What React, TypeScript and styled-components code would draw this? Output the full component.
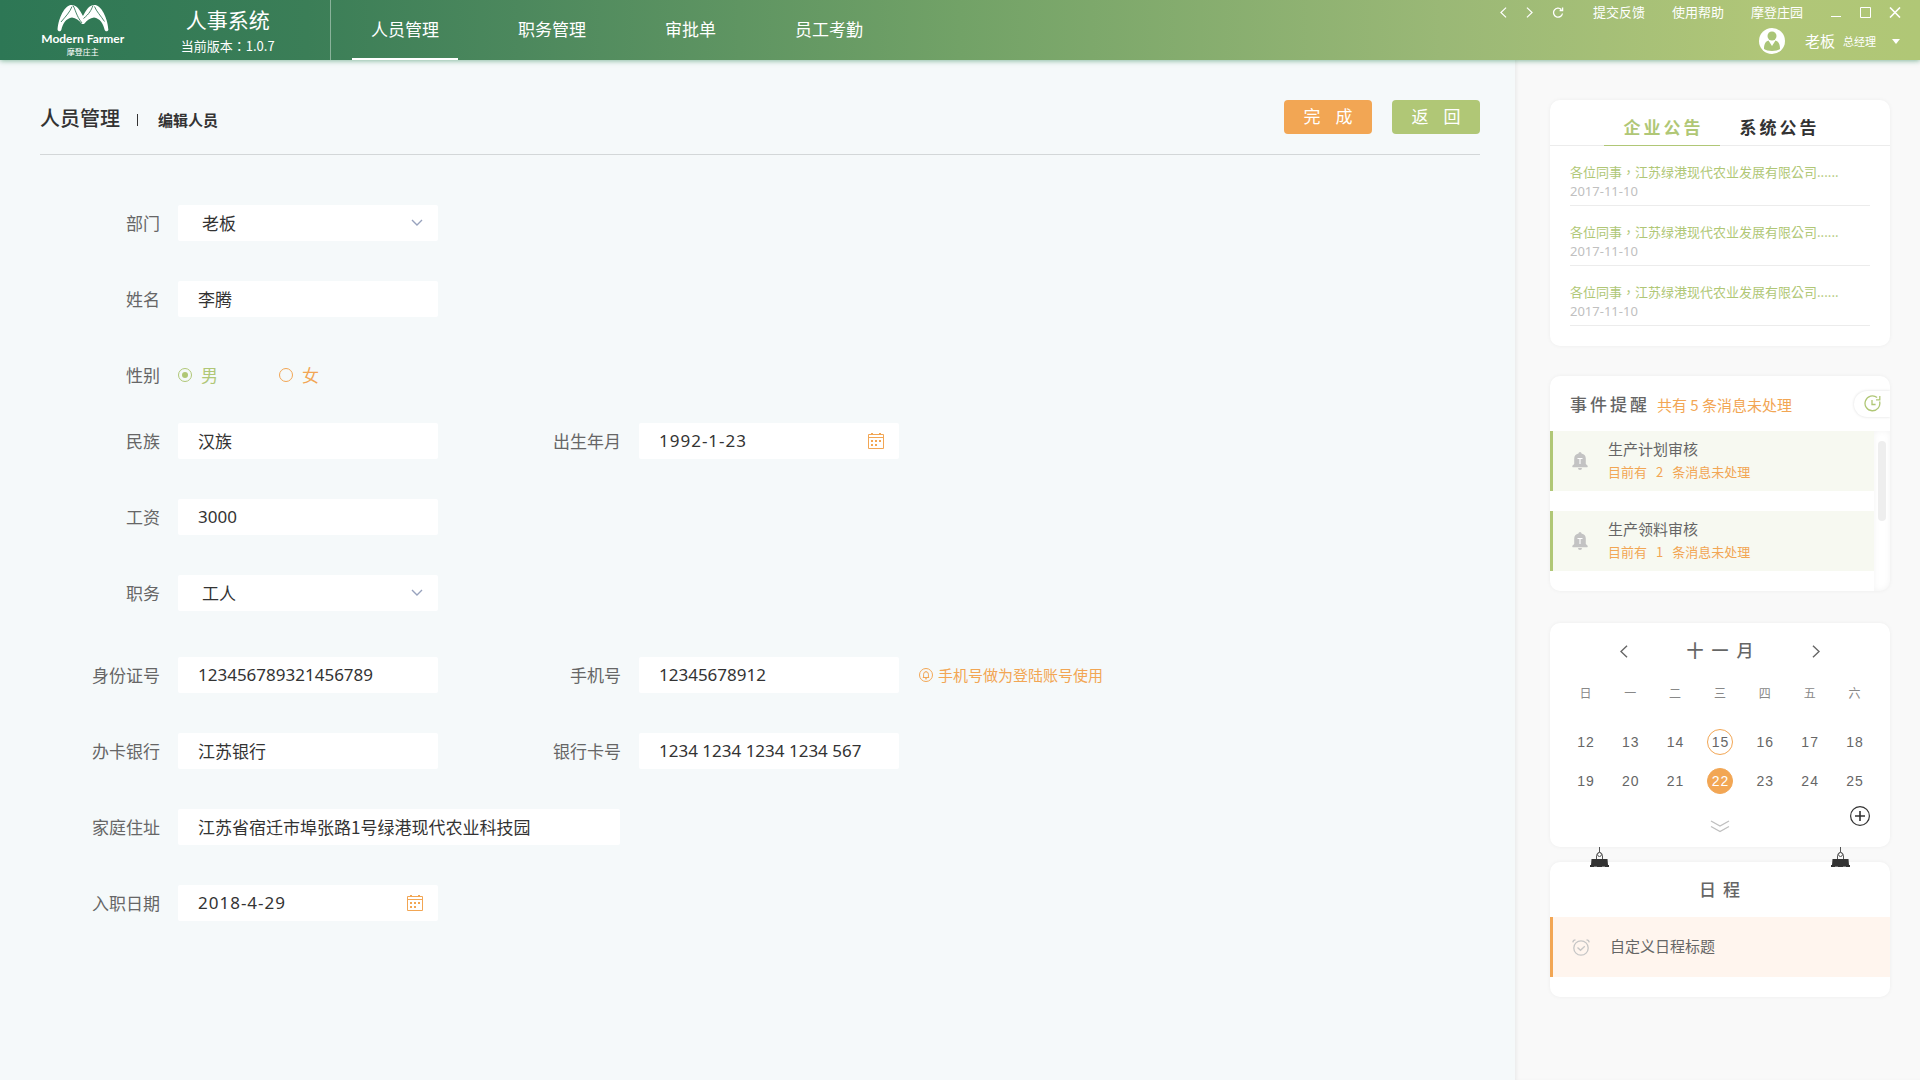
import React, { useState } from 'react';
import styled, { createGlobalStyle, css } from 'styled-components';

const color = {
  green: '#b0c776',
  orange: '#f2a654',
  text: '#333333',
  label: '#666666',
  muted: '#c0c0c0',
  line: '#ececec',
};

const GlobalStyle = createGlobalStyle`
  *, *::before, *::after { box-sizing: border-box; }
  body {
    margin: 0;
    background: #f5f9fa;
    color: ${color.text};
    font-family: "Noto Sans CJK SC", "Noto Sans", sans-serif;
    font-size: 17px;
    line-height: 20px;
  }
  button, input, select { font: inherit; color: inherit; }
  button { border: 0; padding: 0; background: none; cursor: pointer; }
  a { color: inherit; text-decoration: none; }
  h1, h2, p, ul { margin: 0; padding: 0; font-weight: 400; }
  ul { list-style: none; }
  svg { display: block; }
`;

/* ---------- frame ---------- */

const Page = styled.div`
  min-height: 100vh;
  display: flex;
  flex-direction: column;
`;

const Header = styled.header`
  position: relative;
  z-index: 1;
  display: flex;
  height: 60px;
  color: #fff;
  background: linear-gradient(90deg, #2d7755 0%, #3b7e57 16%, #4c885d 27%, #72a267 50%, #9ab876 75%, #b0c678 92%, #b0c776 100%);
  box-shadow: 0 1px 5px rgba(45, 135, 85, 0.55);
`;

const Brand = styled.div`
  display: flex;
  width: 331px;
  padding-left: 40px;
  border-right: 1px solid rgba(255, 255, 255, 0.4);
`;

const Logo = styled.div`
  display: flex;
  flex-direction: column;
  align-items: center;
  width: 86px;
  padding-top: 4px;
`;

const LogoName = styled.span`
  font: 700 12px/14px Lato, sans-serif;
  white-space: nowrap;
`;

const LogoSub = styled.span`
  font-size: 8px;
  line-height: 12px;
`;

const System = styled.div`
  display: flex;
  flex-direction: column;
  align-items: center;
  gap: 5px;
  width: 206px;
  padding-top: 7px;
`;

const SystemName = styled.span`
  font-size: 21px;
  line-height: 24px;
`;

const Version = styled.span`
  font-family: "Noto Sans CJK TC", sans-serif;
  font-size: 13px;
  line-height: 20px;
`;

const Nav = styled.nav`
  display: flex;
  gap: 41px;
  margin-left: 21px;
`;

const NavLink = styled.a<{ $active?: boolean }>`
  display: flex;
  align-items: center;
  padding: 0 19px;
  border-bottom: 2px solid ${p => (p.$active ? '#fff' : 'transparent')};
`;

const HeaderEnd = styled.div`
  display: flex;
  flex-direction: column;
  align-items: flex-end;
  margin-left: auto;
  padding-right: 19px;
`;

const WindowBar = styled.div`
  display: flex;
  align-items: center;
  height: 24px;
  font-size: 13px;
`;

const HistoryButtons = styled.div`
  display: flex;
  gap: 19px;
  margin-right: 29px;
`;

const HelpLinks = styled.div`
  display: flex;
  gap: 27px;
  margin-right: 28px;
`;

const WindowButtons = styled.div`
  display: flex;
  gap: 18px;
`;

const Account = styled.button`
  display: flex;
  align-items: center;
  height: 34px;
`;

const AccountName = styled.span`
  margin: 0 8px 0 20px;
  font-size: 15px;
`;

const AccountRole = styled.span`
  margin: 0 15px 0 0;
  font-size: 11px;
`;

const Body = styled.div`
  flex: 1;
  display: flex;
`;

/* ---------- main form ---------- */

const Main = styled.main`
  flex: 1;
  padding: 40px 35px 40px 40px;
`;

const TitleBar = styled.div`
  display: flex;
  align-items: flex-start;
  justify-content: space-between;
  height: 55px;
  border-bottom: 1px solid #d3d7d8;
`;

const Titles = styled.div`
  display: flex;
  align-items: center;
  height: 36px;
`;

const Title = styled.h1`
  font-size: 20px;
  font-weight: 500;
`;

const SubTitle = styled.h2`
  display: flex;
  align-items: center;
  gap: 20px;
  margin-left: 17px;
  padding-top: 4px;
  font-size: 15px;
  font-weight: 700;

  &::before {
    content: '';
    width: 1px;
    height: 12px;
    background: ${color.text};
  }
`;

const Actions = styled.div`
  display: flex;
  gap: 20px;
`;

const ActionButton = styled.button<{ $tone: string }>`
  width: 88px;
  height: 34px;
  padding: 0 0 2px 15px;
  border-radius: 4px;
  background: ${p => p.$tone};
  color: #fff;
  letter-spacing: 15px;
`;

const Form = styled.form`
  padding-top: 50px;
`;

const Row = styled.div<{ $after?: number }>`
  display: flex;
  align-items: center;
  height: 36px;
  margin-bottom: ${p => p.$after ?? 40}px;
`;

const Label = styled.label<{ $second?: boolean }>`
  width: ${p => (p.$second ? 183 : 120)}px;
  margin-right: 18px;
  color: ${color.label};
  text-align: right;
`;

const Caption = styled.span`
  width: 120px;
  margin-right: 18px;
  color: ${color.label};
  text-align: right;
`;

const Field = styled.div<{ $wide?: boolean }>`
  display: flex;
  align-items: center;
  width: ${p => (p.$wide ? 442 : 260)}px;
  height: 36px;
  padding-right: 15px;
  border-radius: 2px;
  background: #fff;
`;

const fieldText = css`
  flex: 1;
  min-width: 0;
  height: 36px;
  border: 0;
  outline: 0;
  background: transparent;
`;

const TextInput = styled.input<{ $kind?: 'number' | 'date' }>`
  ${fieldText}
  padding: 0 0 2px 20px;
  ${p => p.$kind && css`font-family: "Noto Sans", sans-serif;`}
  ${p => p.$kind === 'date' && css`letter-spacing: 1px;`}
`;

const SelectBox = styled.div`
  display: grid;
  grid-template-columns: 1fr 27px;
  align-items: center;
  width: 260px;
  height: 36px;
  border-radius: 2px;
  background: #fff;
`;

const Select = styled.select`
  ${fieldText}
  grid-area: 1 / 1 / 2 / 3;
  appearance: none;
  padding: 0 0 0 24px;
`;

const SelectArrow = styled.svg`
  grid-area: 1 / 2;
  pointer-events: none;
`;

const RadioLabel = styled.label<{ $tone: string }>`
  display: flex;
  align-items: center;
  gap: 9px;
  width: 101px;
  color: ${p => p.$tone};
`;

const Radio = styled.input`
  appearance: none;
  display: grid;
  place-items: center;
  width: 14px;
  height: 14px;
  margin: 0;
  border: 1px solid currentColor;
  border-radius: 50%;

  &:checked::before {
    content: '';
    width: 6px;
    height: 6px;
    border-radius: 50%;
    background: currentColor;
  }
`;

const Hint = styled.span`
  display: flex;
  align-items: center;
  gap: 5px;
  margin-left: 20px;
  color: ${color.orange};
  font-size: 15px;
`;

/* ---------- sidebar ---------- */

const Sidebar = styled.aside`
  width: 405px;
  padding: 40px 30px 40px 35px;
  background: #f9f9f9;
  box-shadow: inset 3px 0 4px -2px rgba(0, 0, 0, 0.08);
`;

const Card = styled.section<{ $after?: number }>`
  position: relative;
  margin-bottom: ${p => p.$after ?? 0}px;
  border-radius: 10px;
  background: #fff;
  box-shadow: 0 0 4px rgba(0, 0, 0, 0.05);
`;

const Tabs = styled.div`
  display: flex;
  justify-content: center;
  height: 46px;
  border-bottom: 1px solid ${color.line};
`;

const Tab = styled.button<{ $active?: boolean }>`
  width: 116px;
  height: 46px;
  padding: 9px 0 0 3px;
  border-bottom: 1px solid ${p => (p.$active ? color.green : color.line)};
  color: ${p => (p.$active ? color.green : color.text)};
  font-weight: 700;
  letter-spacing: 3px;
`;

const NoticeList = styled.ul`
  padding: 0 20px 20px;
`;

const Notice = styled.li`
  display: flex;
  flex-direction: column;
  justify-content: flex-end;
  height: 60px;
  padding-bottom: 5px;
  border-bottom: 1px solid ${color.line};
  color: ${color.green};
  font-family: "Noto Sans CJK TC", sans-serif;
  font-size: 13px;
`;

const NoticeDate = styled.time`
  color: ${color.muted};
  font-family: "Noto Sans", sans-serif;
  line-height: 18px;
`;

const EventHead = styled.div`
  display: flex;
  align-items: center;
  height: 55px;
  padding-left: 20px;
`;

const EventTitle = styled.h2`
  color: ${color.label};
  font-size: 17px;
  font-weight: 500;
  letter-spacing: 3px;
`;

const EventCount = styled.p`
  margin-left: 7px;
  padding-top: 2px;
  color: ${color.orange};
  font-size: 15px;
`;

const HistoryButton = styled.button`
  display: flex;
  align-items: center;
  width: 36px;
  height: 26px;
  margin-left: auto;
  padding-left: 10px;
  border-radius: 13px 0 0 13px;
  background: #fff;
  box-shadow: 0 0 3px rgba(0, 0, 0, 0.14);
  clip-path: inset(-4px 0 -4px -4px);
`;

const EventBody = styled.div`
  display: flex;
`;

const EventList = styled.ul`
  flex: 1;
`;

const Entry = styled.li<{ $warm?: boolean }>`
  display: flex;
  align-items: center;
  height: 60px;
  margin-bottom: 20px;
  padding-left: 19px;
  border-left: 3px solid ${p => (p.$warm ? color.orange : color.green)};
  background: ${p => (p.$warm ? '#fff5ee' : '#f7f9f1')};
  color: ${color.label};
  font-size: 15px;
`;

const EntryText = styled.div`
  margin-left: 20px;
  padding-bottom: 2px;
`;

const EntryNote = styled.p`
  padding-top: 3px;
  color: ${color.orange};
  font-size: 13px;
`;

const EntryNumber = styled.span`
  margin: 0 9px;
`;

const ScrollTrack = styled.div`
  width: 16px;
  padding: 10px 4px;
  border-radius: 0 0 10px 0;
  box-shadow: inset 0 0 6px rgba(0, 0, 0, 0.05);
`;

const ScrollThumb = styled.div`
  width: 8px;
  height: 80px;
  border-radius: 4px;
  background: #eeeeee;
`;

const MonthBar = styled.div`
  display: flex;
  align-items: center;
  justify-content: space-between;
  height: 56px;
  padding: 0 70px;
  color: ${color.label};
`;

const MonthName = styled.h2`
  padding: 0 0 2px 8px;
  font-size: 17px;
  font-weight: 500;
  letter-spacing: 8px;
`;

const Calendar = styled.table`
  width: calc(100% - 26px);
  margin: 0 13px;
  border-collapse: collapse;
  table-layout: fixed;
  color: ${color.label};
  text-align: center;
`;

const WeekDay = styled.th`
  height: 28px;
  padding: 0;
  color: #888888;
  font-size: 12px;
  font-weight: 400;
`;

const DayCell = styled.td<{ $first?: boolean }>`
  height: ${p => (p.$first ? 54 : 39)}px;
  padding: ${p => (p.$first ? 15 : 0)}px 0 0;
`;

const Day = styled.button<{ $mark?: 'ring' | 'solid' }>`
  display: block;
  width: 26px;
  height: 26px;
  margin: 0 auto;
  padding-left: 1px;
  border: 1px solid ${p => (p.$mark ? color.orange : 'transparent')};
  border-radius: 50%;
  background: ${p => (p.$mark === 'solid' ? color.orange : 'transparent')};
  color: ${p => (p.$mark === 'solid' ? '#fff' : color.label)};
  font: 14px/20px "Liberation Sans", Arial, sans-serif;
  letter-spacing: 1px;
`;

const CalendarFoot = styled.div`
  display: grid;
  grid-template-columns: 1fr auto 1fr;
  height: 47px;
  padding: 6px 20px 0;
`;

const ExpandButton = styled.button`
  grid-column: 2;
  align-self: center;
`;

const AddButton = styled.button`
  grid-column: 3;
  justify-self: end;
  align-self: start;
`;

const Clip = styled.svg<{ $side: 'left' | 'right' }>`
  position: absolute;
  top: -15px;
  ${p => p.$side}: 40px;
`;

const ScheduleTitle = styled.h2`
  height: 55px;
  padding-left: 6px;
  color: ${color.label};
  font-size: 17px;
  font-weight: 500;
  line-height: 53px;
  letter-spacing: 7px;
  text-align: center;
`;

const CardEnd = styled.div`
  overflow: hidden;
`;

/* ---------- drawings ---------- */

const LogoMark = () => (
  <svg width="52" height="28" viewBox="0 0 52 28" fill="#fff" aria-hidden="true">
    <path d="M.6 26C1 17 6 3 13.500 1c6-1 9.500 5 12.500 11C29 6 32.500 0 38.500 1 46 3 51 17 51.400 26c-1 1.800-3 1.500-3.700 0C46 19 43 14.500 37 13.500c-4 .5-7 3-9.500 6-.8.8-2.200.8-3 0-2.500-3-5.500-5.500-9.500-6C9 14.500 6 19 4.300 26c-.7 1.500-2.700 1.800-3.700 0z" />
    <path d="M16 1.500c2.500 4 3 10 9 17.500M36 1.500c-2 5-3.500 8-9.500 13M15 2.500C13 8 9 12 4 18M37.500 2.500c2 5 6 9 10 15" fill="none" stroke="#37795a" strokeWidth="0.900" />
  </svg>
);

const Chevron = ({ flip, w = 7, h = 11 }: { flip?: boolean; w?: number; h?: number }) => (
  <svg width={w} height={h} viewBox="0 0 7 12" fill="none" stroke="currentColor" strokeWidth="1.3" aria-hidden="true">
    <path d={flip ? 'M.7.7 6.3 6 .7 11.3' : 'M6.3.7.7 6l5.6 5.3'} />
  </svg>
);

const CalendarIcon = () => (
  <svg width="16" height="16" viewBox="0 0 16 16" aria-hidden="true">
    <path d="M.5 1.5h15v14H.5zM.5 4.5h15" fill="none" stroke={color.orange} />
    <path d="M3 0h2v2H3zM11 0h2v2h-2zM3 7h2v2H3zM7 7h2v2H7zM11 7h2v2h-2zM3 11h2v2H3zM7 11h2v2H7z" fill={color.orange} />
  </svg>
);

const HintIcon = () => (
  <svg width="14" height="14" viewBox="0 0 14 14" fill="none" stroke={color.orange} aria-hidden="true">
    <circle cx="7" cy="7" r="6.5" />
    <path d="M3.8 9.5h6.4M4.6 9.3V6.2a2.4 2.4 0 0 1 4.8 0v3.1M6 10.8h2M7 3v1" />
  </svg>
);

const BellIcon = () => (
  <svg width="16" height="18" viewBox="0 0 16 18" aria-hidden="true">
    <path d="M6.500 1.500a1.500 1.500 0 0 1 3 0 5.500 5.500 0 0 1 4.300 5.400V12l1.600 1.400c.7.600.4 1.800-.6 1.800H1.200c-1 0-1.300-1.200-.6-1.800L2.200 12V6.900a5.500 5.500 0 0 1 4.300-5.400zM6 16h4a2 2 0 0 1-4 0z" fill="#c3c3c3" />
    <path d="M5.500 6.500h5M8 6.500v5.500" stroke="#fff" strokeWidth="1.100" />
  </svg>
);

const ClockIcon = () => (
  <svg width="17" height="17" viewBox="0 0 17 17" fill="none" stroke={color.green} strokeWidth="1.300" aria-hidden="true">
    <path d="M15.600 6.500a7.400 7.400 0 1 1-2.500-3.900" />
    <path d="M15.800 1v3.800H12" />
    <path d="M8 5v4.500h3.600" />
  </svg>
);

const AlarmIcon = () => (
  <svg width="18" height="17" viewBox="0 0 18 17" fill="none" stroke="#c6c6c6" strokeWidth="1.300" aria-hidden="true">
    <circle cx="9" cy="9" r="7.200" />
    <path d="M5.500 8.500 8.500 11.300l4.300-4M.8 3.300C1 1.800 2 .9 3.500.8M17.200 3.300C17 1.800 16 .9 14.500.8" />
  </svg>
);

const ClipDrawing = ({ side }: { side: 'left' | 'right' }) => (
  <Clip $side={side} width="19" height="20" viewBox="0 0 19 20" aria-hidden="true">
    <path d="M9.500 0v5M6.500 12V8.500Q7 5.500 9.500 5.500T12.500 8.500V12" fill="none" stroke="#555" />
    <circle cx="9.500" cy="7.500" r="2" fill="#f9f9f9" stroke="#555" />
    <path d="M1.500 12h16l.5 6h1v2H0v-2h1z" fill="#333" />
    <path d="M4 19.500h3M12 19.500h3" stroke="#777" />
  </Clip>
);

/* ---------- sections ---------- */

function TopBar() {
  return (
    <Header>
      <Brand>
        <Logo>
          <LogoMark />
          <LogoName>Modern Farmer</LogoName>
          <LogoSub>摩登庄主</LogoSub>
        </Logo>
        <System>
          <SystemName>人事系统</SystemName>
          <Version>当前版本：1.0.7</Version>
        </System>
      </Brand>
      <Nav>
        {['人员管理', '职务管理', '审批单', '员工考勤'].map((name, i) => (
          <NavLink key={name} href="#" $active={i === 0}>{name}</NavLink>
        ))}
      </Nav>
      <HeaderEnd>
        <WindowBar>
          <HistoryButtons>
            <button aria-label="后退"><Chevron /></button>
            <button aria-label="前进"><Chevron flip /></button>
            <button aria-label="刷新">
              <svg width="12" height="11" viewBox="10 0 12 11" fill="none" stroke="currentColor" strokeWidth="1.300">
                <path d="M20.500 6.500a4.500 4.500 0 1 1-1.200-4M20.600.5v3h-3" />
              </svg>
            </button>
          </HistoryButtons>
          <HelpLinks>
            <a href="#">提交反馈</a>
            <a href="#">使用帮助</a>
            <a href="#">摩登庄园</a>
          </HelpLinks>
          <WindowButtons>
            <button aria-label="最小化">
              <svg width="11" height="11" stroke="currentColor"><path d="M0 9.500h10" /></svg>
            </button>
            <button aria-label="最大化">
              <svg width="11" height="11" fill="none" stroke="currentColor"><path d="M.5.5h10v10H.5z" /></svg>
            </button>
            <button aria-label="关闭">
              <svg width="12" height="11" stroke="currentColor" strokeWidth="1.600"><path d="M1 .5l10 10M11 .5l-10 10" /></svg>
            </button>
          </WindowButtons>
        </WindowBar>
        <Account>
          <svg width="26" height="26" viewBox="0 0 26 26" aria-hidden="true">
            <circle cx="13" cy="13" r="13" fill="#fff" />
            <circle cx="13" cy="8" r="4.500" fill="#aac577" />
            <path d="M5 21c0-5 1.500-7.500 4.500-8.500L13 18l3.500-5.500C19.500 13.500 21 16 21 21c-3 2.500-13 2.500-16 0z" fill="#aac577" />
          </svg>
          <AccountName>老板</AccountName>
          <AccountRole>总经理</AccountRole>
          <svg width="10" height="5" fill="currentColor" aria-hidden="true"><path d="M1 0h8L5 5z" /></svg>
        </Account>
      </HeaderEnd>
    </Header>
  );
}

function TextField(p: { id: string; label: string; value: string; kind?: 'number' | 'date'; second?: boolean; wide?: boolean }) {
  return (
    <>
      <Label htmlFor={p.id} $second={p.second}>{p.label}</Label>
      <Field $wide={p.wide}>
        <TextInput id={p.id} defaultValue={p.value} $kind={p.kind} />
        {p.kind === 'date' && <button type="button" aria-label="选择日期"><CalendarIcon /></button>}
      </Field>
    </>
  );
}

function SelectField({ id, label, value }: { id: string; label: string; value: string }) {
  return (
    <>
      <Label htmlFor={id}>{label}</Label>
      <SelectBox>
        <Select id={id} defaultValue={value}><option>{value}</option></Select>
        <SelectArrow width="12" height="8" viewBox="0 0 12 8" fill="none" stroke="#98a2bd" strokeWidth="1.400" aria-hidden="true">
          <path d="M1 1l5 5 5-5" />
        </SelectArrow>
      </SelectBox>
    </>
  );
}

function PersonForm() {
  const [sex, setSex] = useState('男');
  return (
    <Form>
      <Row><SelectField id="dept" label="部门" value="老板" /></Row>
      <Row><TextField id="name" label="姓名" value="李腾" /></Row>
      <Row $after={30}>
        <Caption>性别</Caption>
        {[['男', color.green], ['女', color.orange]].map(([name, tone]) => (
          <RadioLabel key={name} $tone={tone}>
            <Radio type="radio" name="sex" checked={sex === name} onChange={() => setSex(name)} />
            {name}
          </RadioLabel>
        ))}
      </Row>
      <Row>
        <TextField id="nation" label="民族" value="汉族" />
        <TextField id="birth" label="出生年月" value="1992-1-23" kind="date" second />
      </Row>
      <Row><TextField id="salary" label="工资" value="3000" kind="number" /></Row>
      <Row $after={46}><SelectField id="job" label="职务" value="工人" /></Row>
      <Row>
        <TextField id="idcard" label="身份证号" value="123456789321456789" kind="number" />
        <TextField id="phone" label="手机号" value="12345678912" kind="number" second />
        <Hint><HintIcon />手机号做为登陆账号使用</Hint>
      </Row>
      <Row>
        <TextField id="bank" label="办卡银行" value="江苏银行" />
        <TextField id="card" label="银行卡号" value="1234 1234 1234 1234 567" kind="number" second />
      </Row>
      <Row><TextField id="address" label="家庭住址" value="江苏省宿迁市埠张路1号绿港现代农业科技园" wide /></Row>
      <Row><TextField id="entry" label="入职日期" value="2018-4-29" kind="date" /></Row>
    </Form>
  );
}

function Notices() {
  return (
    <Card $after={30}>
      <Tabs>
        <Tab $active>企业公告</Tab>
        <Tab>系统公告</Tab>
      </Tabs>
      <NoticeList>
        {[1, 2, 3].map(n => (
          <Notice key={n}>
            <a href="#">各位同事，江苏绿港现代农业发展有限公司......</a>
            <NoticeDate>2017-11-10</NoticeDate>
          </Notice>
        ))}
      </NoticeList>
    </Card>
  );
}

const events = [
  { name: '生产计划审核', count: 2 },
  { name: '生产领料审核', count: 1 },
];

function Events() {
  return (
    <Card $after={32}>
      <EventHead>
        <EventTitle>事件提醒</EventTitle>
        <EventCount>共有 5 条消息未处理</EventCount>
        <HistoryButton aria-label="历史"><ClockIcon /></HistoryButton>
      </EventHead>
      <EventBody>
        <EventList>
          {events.map(e => (
            <Entry key={e.name}>
              <BellIcon />
              <EntryText>
                <p>{e.name}</p>
                <EntryNote>目前有<EntryNumber>{e.count}</EntryNumber>条消息未处理</EntryNote>
              </EntryText>
            </Entry>
          ))}
        </EventList>
        <ScrollTrack><ScrollThumb /></ScrollTrack>
      </EventBody>
    </Card>
  );
}

const weeks = [
  [12, 13, 14, 15, 16, 17, 18],
  [19, 20, 21, 22, 23, 24, 25],
];

function Month() {
  return (
    <Card $after={15}>
      <MonthBar>
        <button aria-label="上个月"><Chevron w={8} h={13} /></button>
        <MonthName>十一月</MonthName>
        <button aria-label="下个月"><Chevron flip w={8} h={13} /></button>
      </MonthBar>
      <Calendar>
        <thead>
          <tr>{['日', '一', '二', '三', '四', '五', '六'].map(d => <WeekDay key={d}>{d}</WeekDay>)}</tr>
        </thead>
        <tbody>
          {weeks.map((week, i) => (
            <tr key={i}>
              {week.map(d => (
                <DayCell key={d} $first={i === 0}>
                  <Day $mark={d === 15 ? 'ring' : d === 22 ? 'solid' : undefined}>{d}</Day>
                </DayCell>
              ))}
            </tr>
          ))}
        </tbody>
      </Calendar>
      <CalendarFoot>
        <ExpandButton aria-label="展开">
          <svg width="20" height="13" viewBox="0 0 20 13" fill="none" stroke="#c0c0c0" strokeWidth="1.400">
            <path d="M1 1l9 5 9-5M1 6.500l9 5 9-5" />
          </svg>
        </ExpandButton>
        <AddButton aria-label="添加日程">
          <svg width="20" height="20" viewBox="0 0 20 20" fill="none" stroke="#333">
            <circle cx="10" cy="10" r="9.400" strokeWidth="1.200" />
            <path d="M5 10h10M10 5v10" strokeWidth="1.600" />
          </svg>
        </AddButton>
      </CalendarFoot>
    </Card>
  );
}

function Schedule() {
  return (
    <Card>
      <ClipDrawing side="left" />
      <ClipDrawing side="right" />
      <ScheduleTitle>日程</ScheduleTitle>
      <CardEnd>
        <ul>
          <Entry $warm>
            <AlarmIcon />
            <EntryText>自定义日程标题</EntryText>
          </Entry>
        </ul>
      </CardEnd>
    </Card>
  );
}

export default function App() {
  return (
    <Page>
      <GlobalStyle />
      <TopBar />
      <Body>
        <Main>
          <TitleBar>
            <Titles>
              <Title>人员管理</Title>
              <SubTitle>编辑人员</SubTitle>
            </Titles>
            <Actions>
              <ActionButton $tone={color.orange}>完成</ActionButton>
              <ActionButton $tone={color.green}>返回</ActionButton>
            </Actions>
          </TitleBar>
          <PersonForm />
        </Main>
        <Sidebar>
          <Notices />
          <Events />
          <Month />
          <Schedule />
        </Sidebar>
      </Body>
    </Page>
  );
}
